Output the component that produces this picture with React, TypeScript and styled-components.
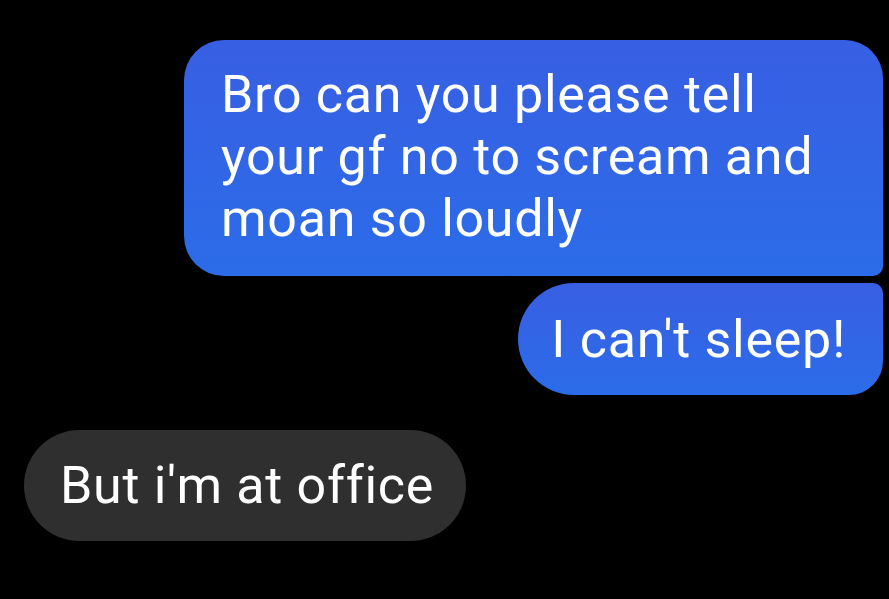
import { createGlobalStyle, styled } from 'styled-components';

const GlobalStyle = createGlobalStyle`
  html, body {
    margin: 0;
    padding: 0;
    background: #000;
  }
`;

const Thread = styled.div`
  width: 889px;
  height: 599px;
  box-sizing: border-box;
  padding: 40px 6px 0 24px;
  display: flex;
  flex-direction: column;
  gap: 35px;
  font-family: Roboto, 'Noto Sans', sans-serif;
  color: #fff;
  overflow: hidden;
`;

const Group = styled.div<{ $side: 'left' | 'right' }>`
  display: flex;
  flex-direction: column;
  align-items: ${({ $side }) => ($side === 'right' ? 'flex-end' : 'flex-start')};
  gap: 7px;
`;

const Bubble = styled.div<{ $mine?: boolean; $radius: string; $pad: string; $width?: number }>`
  box-sizing: border-box;
  width: ${({ $width }) => ($width ? `${$width}px` : 'auto')};
  padding: ${({ $pad }) => $pad};
  border-radius: ${({ $radius }) => $radius};
  background: ${({ $mine }) =>
    $mine ? 'linear-gradient(180deg, #385fe3 0%, #2b6ce8 100%)' : '#2f2f2f'};
  font-size: 52px;
  line-height: 62px;
  letter-spacing: 0.7px;
  white-space: nowrap;
`;

const App = () => {
  return (
    <>
      <GlobalStyle />
      <Thread>
        <Group $side='right'>
          <Bubble $mine $width={699} $pad='24px 30px 26px 37px' $radius='40px 38px 10px 40px'>
            Bro can you please tell
            <br />
            your gf no to scream and
            <br />
            moan so loudly
          </Bubble>
          <Bubble $mine $pad='26px 37px 24px 33px' $radius='56px 10px 34px 56px'>
            I can't sleep!
          </Bubble>
        </Group>
        <Group $side='left'>
          <Bubble $pad='25px 32px 24px 36px' $radius='56px'>
            But i'm at office
          </Bubble>
        </Group>
      </Thread>
    </>
  );
};

export default App;
